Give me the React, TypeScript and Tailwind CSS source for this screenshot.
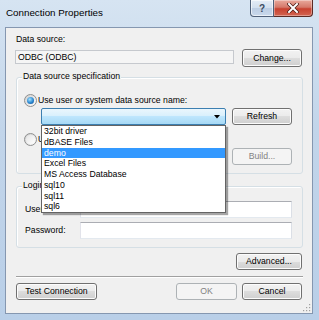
import React from "react";

const btn =
  "h-[17px] rounded-[3px] border border-[#707070] bg-[linear-gradient(#f2f2f2_0%,#ebebeb_50%,#dddddd_50%,#cfcfcf_100%)] shadow-[inset_0_0_0_1px_#fcfcfc] flex items-center justify-center leading-none text-black shrink-0";
const btnOff =
  "h-[17px] rounded-[3px] border border-[#adb2b5] bg-[#f4f4f4] flex items-center justify-center leading-none text-[#838383] shrink-0";
const edit =
  "h-[17px] border border-[#abadb3] border-l-[#e2e3ea] border-r-[#dbdfe6] border-b-[#e3e9ef] bg-white shrink-0";

const sources = [
  "32bit driver",
  "dBASE Files",
  "demo",
  "Excel Files",
  "MS Access Database",
  "sql10",
  "sql11",
  "sql6",
];

function Radio({ checked }: { checked?: boolean }) {
  return (
    <span className="w-[13px] h-[13px] rounded-full border border-[#8e8f8f] bg-[linear-gradient(135deg,#cfcfcf,#fdfdfd)] flex items-center justify-center shrink-0">
      {checked ? (
        <span className="w-[7px] h-[7px] rounded-full bg-[radial-gradient(circle_at_40%_35%,#a6e3ff,#2a87d0_55%,#0e4486)]" />
      ) : (
        <span className="w-[9px] h-[9px] rounded-full bg-[linear-gradient(135deg,#e4e4e4,#ffffff)]" />
      )}
    </span>
  );
}

function GroupLabel({ children }: { children: React.ReactNode }) {
  return (
    <span className="absolute top-[-7px] left-[5px] px-[1px] bg-[#f0f0f0] leading-[11px] whitespace-nowrap">
      {children}
    </span>
  );
}

export default function App() {
  return (
    <div className="w-[319px] h-[320px] overflow-hidden flex flex-col bg-[linear-gradient(#d6e4f2,#c2d5ea_40%,#b9cfe8)] font-['Liberation_Sans',Arial,sans-serif] text-[8.7px] text-black">
      {/* title bar */}
      <div className="h-[27px] flex items-start pl-[6px] pr-[6px] shrink-0">
        <div className="h-[27px] flex items-center text-[9.8px] text-black">
          Connection Properties
        </div>
        <div className="ml-auto flex">
          <div className="w-[24px] h-[17px] border border-t-0 border-[#4f6079] rounded-bl-[4px] bg-[linear-gradient(#e4ecf6,#d2dfee_50%,#bccde3_50%,#c9d9ec)] shadow-[inset_0_0_0_1px_rgba(255,255,255,0.6)] flex items-center justify-center text-[10px] font-bold text-[#3b4a60]">
            ?
          </div>
          <div className="w-[39px] h-[17px] border border-t-0 border-l-0 border-[#5b2a24] rounded-br-[4px] bg-[linear-gradient(#e9a99c,#d5796a_45%,#c8412f_55%,#d26552)] shadow-[inset_0_0_0_1px_rgba(255,255,255,0.35)] flex items-center justify-center">
            <svg width="12" height="10" viewBox="0 0 12 10">
              <path d="M2 1 L10 9 M10 1 L2 9" stroke="#4a1a14" strokeWidth="3.4" strokeLinecap="square" />
              <path d="M2 1 L10 9 M10 1 L2 9" stroke="#ffffff" strokeWidth="2" strokeLinecap="square" />
            </svg>
          </div>
        </div>
      </div>

      {/* client area */}
      <div className="relative ml-[5px] w-[308px] h-[287px] border border-[#8597b0] bg-[#f0f0f0] pl-[10px] pr-[9px] pt-[6px] flex flex-col shrink-0">
        <div className="h-[11px] leading-[11px]">Data source:</div>
        <div className="mt-[4px] flex items-start">
          <div className="ml-[-1px] mt-[1px] w-[219px] h-[14px] border border-[#c6c9ce] bg-[#f5f5f5] pl-[2px] flex items-center leading-none">
            ODBC (ODBC)
          </div>
          <div className={`${btn} ml-auto mr-[1px] w-[60px] !h-[18px]`}>Change...</div>
        </div>

        {/* data source specification */}
        <div className="relative mt-[10px] h-[97px] border border-[#d5dfe5] rounded-[3px] shadow-[inset_1px_1px_0_#fff] pl-[7px] pt-[16px] flex flex-col">
          <GroupLabel>Data source specification</GroupLabel>
          <div className="h-[13px] flex items-center gap-[1px]">
            <Radio checked />
            <span className="leading-none">Use user or system data source name:</span>
          </div>
          <div className="mt-[1px] flex items-start">
            <div className="relative ml-[17px] w-[185px]">
              <div className="h-[17px] border border-[#3c7fb1] rounded-[2px] bg-[linear-gradient(#eaf6fd,#d9f0fc_45%,#bee6fd_50%,#a7d9f5)] flex items-center justify-end pr-[5px]">
                <svg width="6" height="4" viewBox="0 0 6 4">
                  <path d="M0 0 H6 L3 3.5 Z" fill="#000" />
                </svg>
              </div>
              <div className="absolute top-full left-0 w-[185px] z-10 border border-[#646464] bg-white shadow-[2px_2px_1px_rgba(0,0,0,0.35)] flex flex-col">
                {sources.map((s) => (
                  <div
                    key={s}
                    className={`h-[10.75px] leading-[10.75px] pl-[2px] whitespace-nowrap ${
                      s === "demo" ? "bg-[#3399ff] text-white" : "text-black"
                    }`}
                  >
                    {s}
                  </div>
                ))}
              </div>
            </div>
            <div className={`${btn} ml-[6px] w-[60px]`}>Refresh</div>
          </div>
          <div className="mt-[8px] h-[13px] flex items-center gap-[1px]">
            <Radio />
            <span className="leading-none">Use connection string:</span>
          </div>
          <div className="mt-[2px] flex items-start">
            <div className={`${edit} ml-[17px] w-[185px] bg-[#f4f4f4]`} />
            <div className={`${btnOff} ml-[6px] w-[60px]`}>Build...</div>
          </div>
        </div>

        {/* login */}
        <div className="relative mt-[12px] h-[62px] border border-[#d5dfe5] rounded-[3px] shadow-[inset_1px_1px_0_#fff] pl-[8px] pt-[14px] flex flex-col">
          <GroupLabel>Login information</GroupLabel>
          <div className="flex items-center">
            <span className="w-[55px] leading-none">User name:</span>
            <div className={`${edit} w-[212px]`} />
          </div>
          <div className="mt-[4px] flex items-center">
            <span className="w-[55px] leading-none">Password:</span>
            <div className={`${edit} w-[212px]`} />
          </div>
        </div>

        <div className="mt-[5px] flex">
          <div className={`${btn} ml-auto mr-[1px] w-[66px]`}>Advanced...</div>
        </div>

        <div className="mt-[6px] h-[2px] border-t border-[#a0a0a0] border-b border-b-white" />

        <div className="mt-[5px] flex items-center">
          <div className={`${btn} w-[81px]`}>Test Connection</div>
          <div className={`${btnOff} ml-auto w-[61px]`}>OK</div>
          <div className={`${btn} ml-[5px] mr-[1px] w-[60px]`}>Cancel</div>
        </div>

        <svg className="absolute right-[1px] bottom-[1px]" width="10" height="10" viewBox="0 0 10 10">
          {[
            [8, 2],
            [8, 5],
            [5, 5],
            [8, 8],
            [5, 8],
            [2, 8],
          ].map(([x, y]) => (
            <rect key={`${x}-${y}`} x={x} y={y} width="1.2" height="1.2" fill="#a0a0a0" />
          ))}
        </svg>
      </div>
    </div>
  );
}
